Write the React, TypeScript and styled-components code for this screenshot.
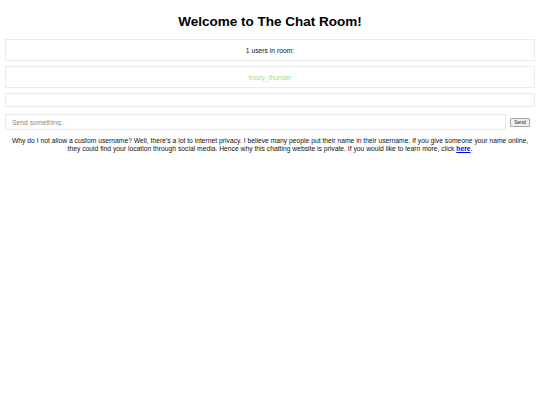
import React from "react";
import styled, { createGlobalStyle } from "styled-components";

const GlobalStyle = createGlobalStyle`
  html, body {
    margin: 0;
    padding: 0;
    background: #ffffff;
    font-family: "Liberation Sans", Arial, sans-serif;
    color: #111;
  }
`;

const Page = styled.div`
  padding: 0 5px;
  display: flex;
  flex-direction: column;
`;

const Title = styled.h1`
  margin: 13px 0 8px 0;
  font-size: 13.5px;
  line-height: 18px;
  font-weight: bold;
  text-align: center;
  color: #000;
`;

const Panel = styled.div<{ $height: number }>`
  height: ${(p) => p.$height}px;
  border: 1px solid #ebebeb;
  display: flex;
  align-items: center;
  justify-content: center;
  font-size: 6.75px;
  margin-bottom: 5px;
  box-sizing: border-box;
`;

const UserName = styled.span`
  color: #8fe69a;
`;

const SendRow = styled.div`
  display: flex;
  align-items: center;
  gap: 4px;
  margin-top: 2px;
`;

const MessageInput = styled.input`
  flex: 1;
  height: 16px;
  box-sizing: border-box;
  border: 1px solid #ebebeb;
  padding: 0 6px;
  font-family: "Liberation Sans", Arial, sans-serif;
  font-size: 6.75px;
  outline: none;
  &::placeholder {
    color: #8a8a8a;
  }
`;

const SendButton = styled.button`
  width: 20px;
  height: 9px;
  padding: 0;
  font-family: "Liberation Sans", Arial, sans-serif;
  font-size: 5px;
  line-height: 7px;
  color: #222;
  background: #efefef;
  border: 1px solid #a8a8a8;
  border-radius: 1px;
  margin-right: 5px;
`;

const Note = styled.p`
  margin: 7px 0 0 0;
  font-size: 6.75px;
  line-height: 8px;
  text-align: center;
  color: #111;
`;

const Link = styled.a`
  color: #0000ee;
  font-weight: bold;
  text-decoration: underline;
`;

export default function App() {
  return (
    <>
      <GlobalStyle />
      <Page>
        <Title>Welcome to The Chat Room!</Title>
        <Panel $height={22}>1 users in room:</Panel>
        <Panel $height={22}>
          <UserName>frosty_thunder</UserName>
        </Panel>
        <Panel $height={14} />
        <SendRow>
          <MessageInput placeholder="Send something.." />
          <SendButton>Send</SendButton>
        </SendRow>
        <Note>
          Why do I not allow a custom username? Well, there's a lot to internet privacy. I believe many people put
          their name in their username. If you give someone your name online, they could find your location through
          social media. Hence why this chatting website is private. If you would like to learn more, click{" "}
          <Link href="#">here</Link>.
        </Note>
      </Page>
    </>
  );
}
